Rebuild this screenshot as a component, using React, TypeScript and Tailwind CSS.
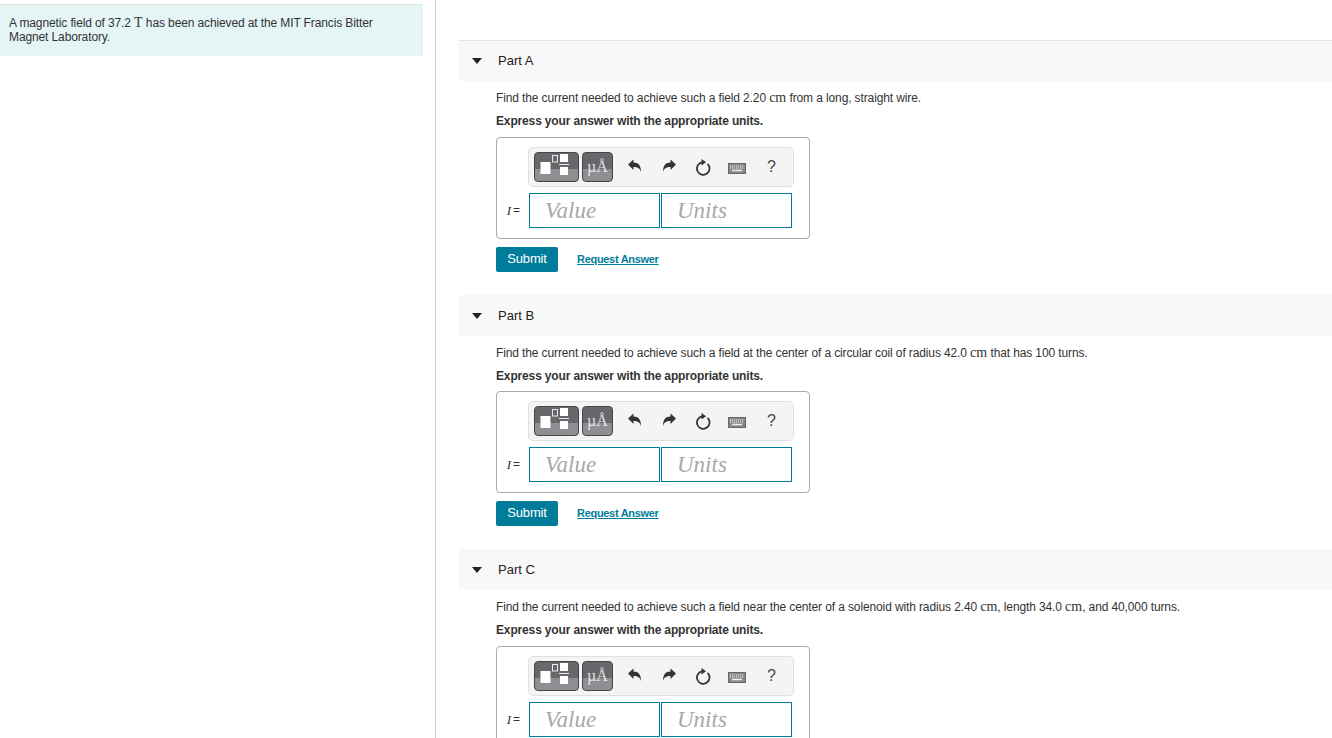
import React from "react";

const sans = "font-['Liberation_Sans',Arial,sans-serif]";
const serif = "font-['Liberation_Serif','Times_New_Roman',serif]";
const buttonBg = "bg-[linear-gradient(#68686c_0_57%,#8e8e93_57%_100%)]";

function Cm({ children }: { children: React.ReactNode }) {
  return <span className={`${serif} text-[14px] tracking-normal`}>{children}</span>;
}

function TemplatesIcon() {
  return (
    <svg width="45" height="30" viewBox="0 0 45 30" className="block">
      <rect x="6.5" y="10" width="10" height="12" fill="#fff" />
      <rect x="18.5" y="3.5" width="5" height="6.5" fill="none" stroke="#e8e8e8" strokeWidth="1" />
      <rect x="26" y="2" width="8" height="8" fill="#fff" />
      <rect x="25" y="12" width="10" height="1" fill="#e8e8e8" />
      <rect x="26" y="15" width="8" height="8" fill="#fff" />
    </svg>
  );
}

function Toolbar() {
  return (
    <div className="ml-[31px] mt-[9px] flex h-10 w-[266px] items-center rounded-[5px] border border-[#e0e0e0] bg-[#f4f4f4] pl-[5px]">
      <div className={`h-[30px] w-[45px] rounded-[4px] border border-[#444] ${buttonBg}`}>
        <div className="-m-px">
          <TemplatesIcon />
        </div>
      </div>
      <div
        className={`ml-[3px] flex h-[30px] w-[31px] items-center justify-center rounded-[4px] border border-[#444] ${buttonBg} ${serif} text-[16px] leading-none text-[#e4e4e4]`}
      >
        µÅ
      </div>
      <svg width="16" height="16" viewBox="0 0 16 16" className="ml-[14px] -translate-y-px">
        <path d="M1 6.5 6.5 1.5v3c5 0 7.5 3 7.5 9.5-1.2-3.6-3-5-7.5-5v3z" fill="#333" />
      </svg>
      <svg width="16" height="16" viewBox="0 0 16 16" className="ml-[18px] -translate-y-px">
        <path d="M15 6.5 9.5 1.5v3c-5 0-7.5 3-7.5 9.5 1.2-3.6 3-5 7.5-5v3z" fill="#333" />
      </svg>
      <svg width="16" height="18" viewBox="0 0 16 18" className="ml-[18px]">
        <path d="M12.5 5.8A6.3 6.3 0 1 1 7 4.3" fill="none" stroke="#333" strokeWidth="1.8" />
        <path d="M6.5 1 11 4.2 6.5 7.5z" fill="#333" />
      </svg>
      <svg width="18" height="11" viewBox="0 0 18 11" className="ml-[17px] translate-y-px">
        <rect x="0.5" y="0.5" width="17" height="10" fill="#8a8a8a" stroke="#666" />
        <path d="M2 3h14M2 5h14" stroke="#eee" strokeWidth="1" strokeDasharray="1 1" />
        <path d="M4 7.5h10" stroke="#eee" strokeWidth="1.5" />
      </svg>
      <span className={`ml-[21px] ${sans} text-[16px] leading-none text-[#444]`}>?</span>
    </div>
  );
}

function AnswerBox() {
  return (
    <div className="h-[102px] w-[314px] rounded-[4px] border border-[#aaa] bg-white">
      <Toolbar />
      <div className="mt-[6px] flex items-center">
        <div className="flex w-8 justify-end pr-[9px] text-[12px] text-[#333]">
          <span className={`${serif} text-[13px] italic`}>I</span>
          <span className="ml-[2px]">=</span>
        </div>
        <div className={`flex h-[35px] w-[131px] items-center border border-[#007c9b] pt-0.5 pl-[15px] ${serif} text-[23px] italic text-[#a8a8a8]`}>
          Value
        </div>
        <div className={`ml-px flex h-[35px] w-[131px] items-center border border-[#007c9b] pt-0.5 pl-[15px] ${serif} text-[23px] italic text-[#a8a8a8]`}>
          Units
        </div>
      </div>
    </div>
  );
}

function Part({ name, children, first, tight }: { name: string; children: React.ReactNode; first?: boolean; tight?: boolean }) {
  return (
    <section className={first ? "h-[255px]" : "h-[254px]"}>
      <div className={`flex h-[41px] items-center bg-[#f8f8f8] ${first ? "border-t border-[#e4e4e4]" : ""}`}>
        <svg width="10" height="6" viewBox="0 0 10 6" className="ml-[13px]">
          <path d="M0 0h10L5 6z" fill="#222" />
        </svg>
        <span className="ml-4 text-[13px] text-[#222]">{name}</span>
      </div>
      <div className="pl-[37px]">
        <p className="mt-[9px] h-[15px] text-[12px] leading-[15px] tracking-[-0.12px] text-[#333]">{children}</p>
        <p className="mt-[9px] h-[15px] text-[12px] leading-[15px] font-bold tracking-[-0.15px] text-[#333]">
          Express your answer with the appropriate units.
        </p>
        <div className={tight ? "mt-[7px]" : "mt-2"}>
          <AnswerBox />
        </div>
        <div className="mt-2 flex items-center">
          <button className="h-[25px] w-[62px] rounded-[2px] bg-[#007c9b] pb-0.5 text-[13px] tracking-[-0.2px] text-white">Submit</button>
          <a className="ml-[19px] text-[11px] font-bold tracking-[-0.3px] text-[#007c9b] underline">Request Answer</a>
        </div>
      </div>
    </section>
  );
}

export default function App() {
  return (
    <div className={`flex h-[738px] overflow-hidden bg-white ${sans}`}>
      <aside className="h-full w-[436px] shrink-0 border-r border-[#c5d3e0] pt-1">
        <div className="h-[52px] w-[423px] border-t border-[#e0e6e6] bg-[#e5f5f6] px-[9px] pt-[11px] text-[12px] leading-[14px] tracking-[-0.12px] text-[#333]">
          A magnetic field of 37.2 <span className={`${serif} text-[14px] font-medium tracking-normal`}>T</span> has been achieved at the MIT Francis Bitter Magnet Laboratory.
        </div>
      </aside>
      <main className="min-w-0 flex-1 pl-[23px] pt-10">
        <Part name="Part A" first>
          Find the current needed to achieve such a field 2.20 <Cm>cm</Cm> from a long, straight wire.
        </Part>
        <Part name="Part B" tight>
          Find the current needed to achieve such a field at the center of a circular coil of radius 42.0 <Cm>cm</Cm> that has 100 turns.
        </Part>
        <Part name="Part C">
          Find the current needed to achieve such a field near the center of a solenoid with radius 2.40 <Cm>cm</Cm>, length 34.0 <Cm>cm</Cm>, and 40,000 turns.
        </Part>
      </main>
    </div>
  );
}
